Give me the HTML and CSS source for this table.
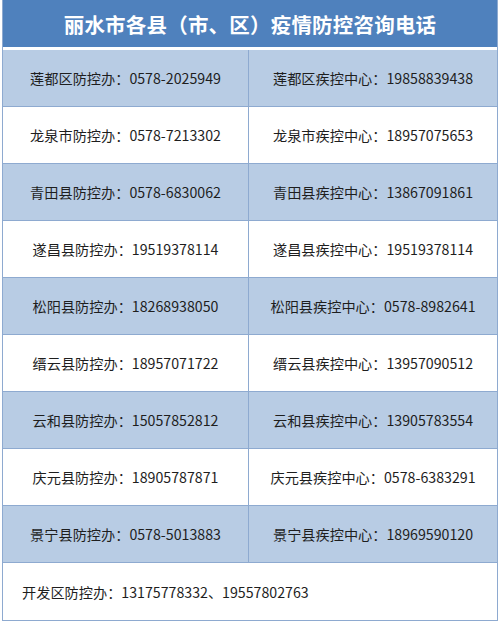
FILE: index.html
```html
<!DOCTYPE html>
<html lang="zh">
<head>
<meta charset="utf-8">
<link rel="stylesheet" href="styles.css">
</head>
<body>
<div class="sheet">
  <div class="title">丽水市各县（市、区）疫情防控咨询电话</div>
  <div class="grid">
    <div class="cell alt">莲都区防控办：0578-2025949</div>
    <div class="cell alt">莲都区疾控中心：19858839438</div>
    <div class="cell">龙泉市防控办：0578-7213302</div>
    <div class="cell">龙泉市疾控中心：18957075653</div>
    <div class="cell alt">青田县防控办：0578-6830062</div>
    <div class="cell alt">青田县疾控中心：13867091861</div>
    <div class="cell">遂昌县防控办：19519378114</div>
    <div class="cell">遂昌县疾控中心：19519378114</div>
    <div class="cell alt">松阳县防控办：18268938050</div>
    <div class="cell alt">松阳县疾控中心：0578-8982641</div>
    <div class="cell">缙云县防控办：18957071722</div>
    <div class="cell">缙云县疾控中心：13957090512</div>
    <div class="cell alt">云和县防控办：15057852812</div>
    <div class="cell alt">云和县疾控中心：13905783554</div>
    <div class="cell">庆元县防控办：18905787871</div>
    <div class="cell">庆元县疾控中心：0578-6383291</div>
    <div class="cell alt">景宁县防控办：0578-5013883</div>
    <div class="cell alt">景宁县疾控中心：18969590120</div>
    <div class="cell wide">开发区防控办：13175778332、19557802763</div>
  </div>
</div>
</body>
</html>
```
FILE: styles.css
```css
html, body {
  margin: 0;
  padding: 0;
  background: #ffffff;
}
body {
  font-family: "Noto Sans CJK SC", "Noto Sans", sans-serif;
  color: #1e1e1e;
}
.sheet {
  width: 496px;
  margin-left: 2px;
  border-left: 1px solid #8eaad0;
  border-right: 1px solid #8eaad0;
  border-bottom: 1px solid #8eaad0;
  box-sizing: border-box;
}
.title {
  height: 47px;
  background: #4f81bd;
  color: #ffffff;
  font-weight: bold;
  font-size: 20.5px;
  display: flex;
  align-items: center;
  justify-content: center;
  border-bottom: 3px solid #ffffff;
  letter-spacing: 0.2px;
}
.grid {
  display: grid;
  grid-template-columns: 246px 1fr;
}
.cell {
  height: 57px;
  display: flex;
  align-items: center;
  justify-content: center;
  font-size: 14.2px;
  border-bottom: 1px solid #8eaad0;
  box-sizing: border-box;
}
.cell:nth-child(odd) {
  border-right: 1px solid #8eaad0;
}
.cell.alt {
  background: #b8cce4;
}
.cell.wide {
  grid-column: 1 / span 2;
  justify-content: flex-start;
  padding-left: 19px;
  border-right: none;
  border-bottom: none;
  height: 57px;
}
```
